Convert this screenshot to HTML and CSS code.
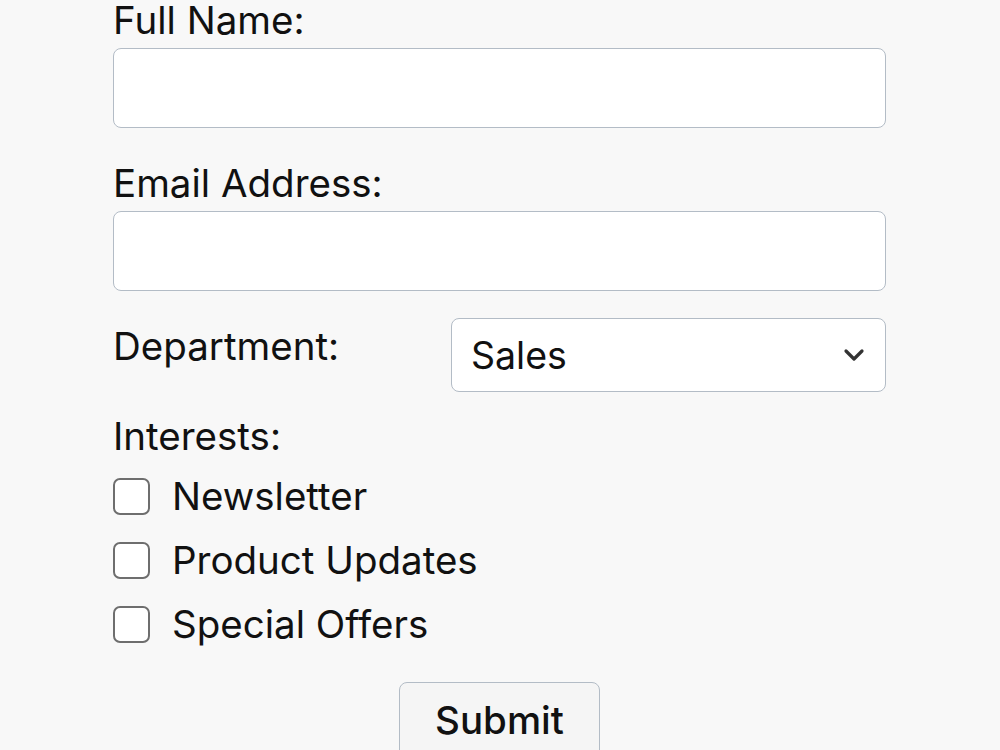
FILE: index.html
```html
<!DOCTYPE html>
<html lang="en">
<head>
<meta charset="utf-8">
<title>Form</title>
<link rel="stylesheet" href="styles.css">
</head>
<body>
<form class="form">
  <label class="label" for="name">Full Name:</label>
  <input class="input" id="name" type="text">

  <label class="label label-gap" for="email">Email Address:</label>
  <input class="input" id="email" type="email">

  <div class="dept-row">
    <label class="label dept-label" for="dept">Department:</label>
    <div class="select">
      <span class="select-value">Sales</span>
      <svg class="chevron" width="22" height="14" viewBox="0 0 22 14"><path d="M3 3 L11 11 L19 3" fill="none" stroke="#333" stroke-width="3.2" stroke-linecap="round" stroke-linejoin="round"/></svg>
    </div>
  </div>

  <div class="label interests-label">Interests:</div>
  <div class="checks">
    <label class="check"><span class="box"></span><span>Newsletter</span></label>
    <label class="check"><span class="box"></span><span>Product Updates</span></label>
    <label class="check"><span class="box"></span><span>Special Offers</span></label>
  </div>

  <div class="actions">
    <button type="button" class="submit">Submit</button>
  </div>
</form>
</body>
</html>
```
FILE: styles.css
```css
html, body {
  margin: 0;
  padding: 0;
  background: #f8f8f8;
  overflow: hidden;
}
body {
  font-family: Inter, "Noto Sans", sans-serif;
  color: #111111;
  font-size: 38.5px;
}
.form {
  width: 773px;
  margin: 0 0 0 113px;
  display: flex;
  flex-direction: column;
}
.label {
  display: block;
  line-height: 38px;
  font-size: 38.5px;
  padding-top: 1px;
}
.input {
  display: block;
  box-sizing: border-box;
  width: 100%;
  height: 80px;
  margin-top: 9px;
  border: 1.5px solid #b3bcc6;
  border-radius: 8px;
  background: #ffffff;
  font: inherit;
}
.label-gap {
  margin-top: 35px;
}
.dept-row {
  display: flex;
  align-items: flex-start;
  margin-top: 27px;
}
.dept-label {
  width: 338px;
  flex: none;
  margin-top: 8px;
}
.select {
  flex: 1;
  box-sizing: border-box;
  height: 74px;
  border: 1.5px solid #b3bcc6;
  border-radius: 8px;
  background: #ffffff;
  display: flex;
  align-items: center;
  justify-content: space-between;
  padding: 0 20px 0 19px;
}
.select-value {
  font-size: 37.5px;
  line-height: 40px;
  padding-top: 2px;
}
.chevron {
  display: block;
}
.interests-label {
  margin-top: 24px;
}
.checks {
  display: flex;
  flex-direction: column;
  margin-top: 9px;
}
.check {
  display: flex;
  align-items: center;
  height: 64px;
  gap: 22px;
  line-height: 40px;
}
.box {
  box-sizing: border-box;
  width: 37px;
  height: 37px;
  border: 2.5px solid #6e6e6e;
  border-radius: 7px;
  background: #ffffff;
  flex: none;
}
.actions {
  display: flex;
  justify-content: center;
  margin-top: 26px;
}
.submit {
  box-sizing: border-box;
  width: 201px;
  height: 76px;
  border: 1.5px solid #b3bcc6;
  border-radius: 8px;
  background: #f5f5f5;
  font-family: inherit;
  font-size: 38.5px;
  font-weight: 500;
  color: #111111;
  padding: 0;
}
```
